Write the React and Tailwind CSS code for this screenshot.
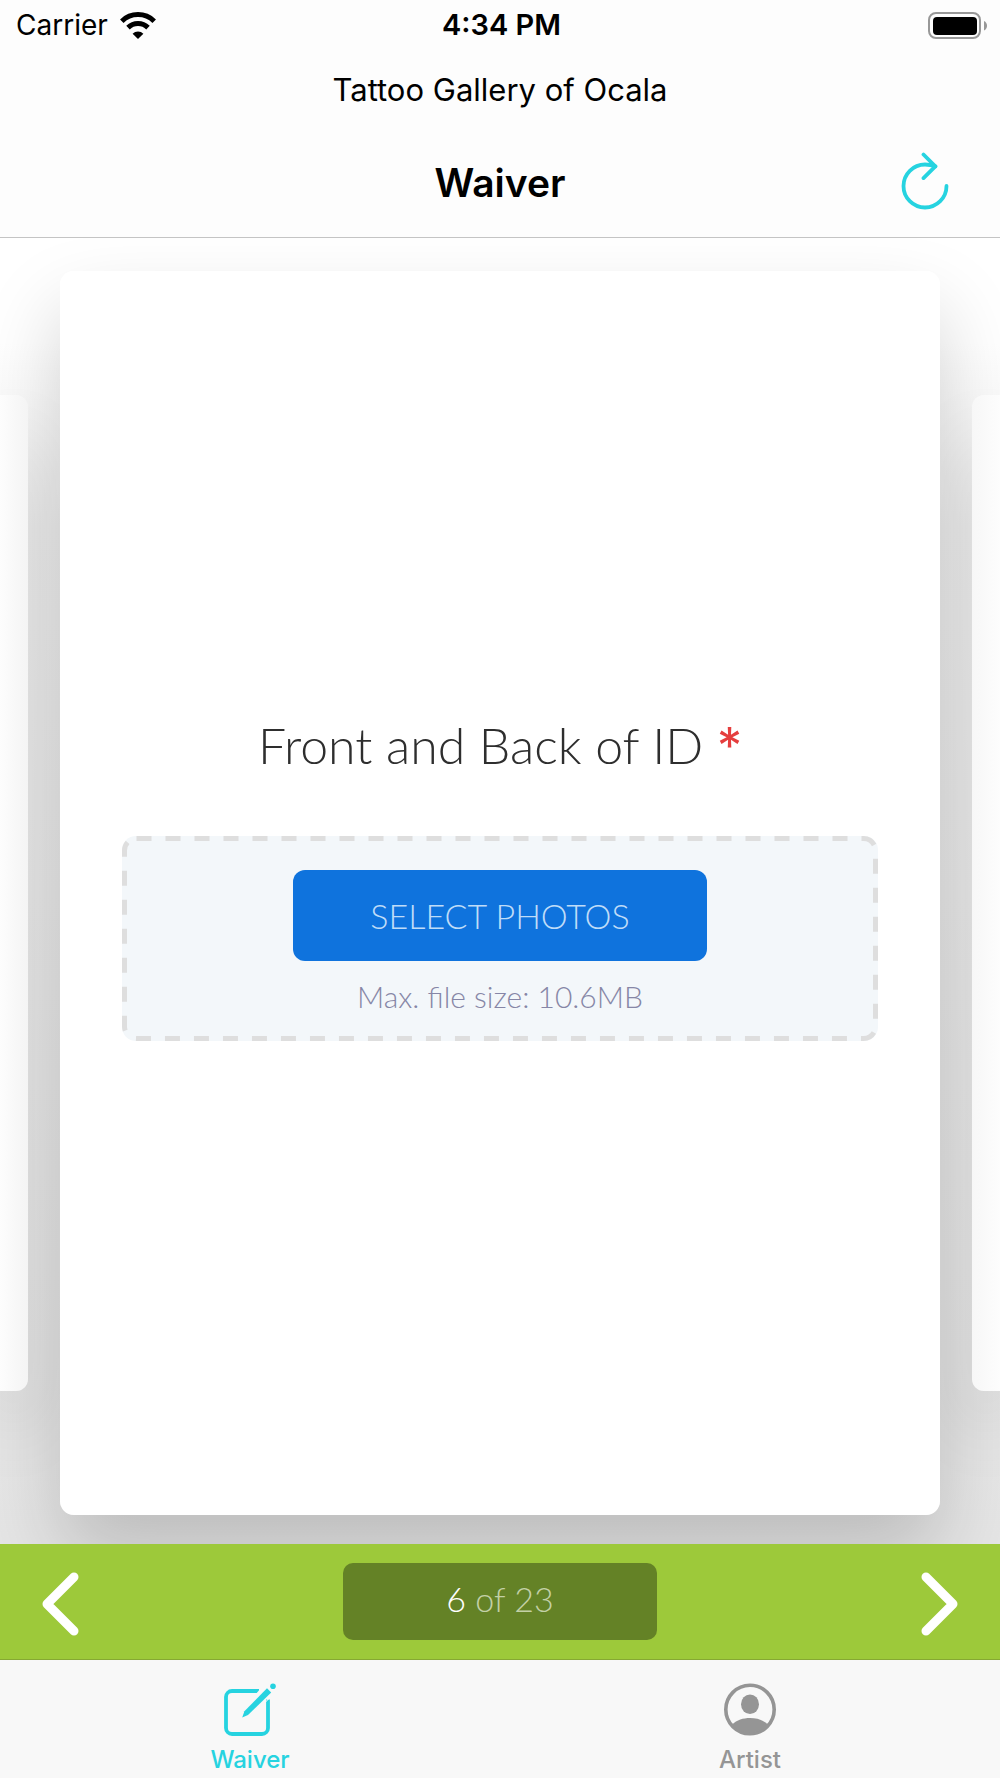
import React from 'react';

const WifiIcon = () => (
  <svg viewBox="0 0 36 27" className="w-9 h-[27px]" fill="none" stroke="#000" aria-hidden="true">
    <path d="M1.8 9.2a23.2 23.2 0 0 1 32.4 0" strokeWidth="5" />
    <path d="M8 15.6a14.3 14.3 0 0 1 20 0" strokeWidth="5" />
    <path d="M18 27l-5.4-5.3a7.6 7.6 0 0 1 10.8 0z" fill="#000" stroke="none" />
  </svg>
);

const BatteryIcon = () => (
  <svg viewBox="0 0 59 27" className="w-[59px] h-[27px]" aria-hidden="true">
    <rect x="1" y="1" width="51" height="25" rx="7" fill="none" stroke="#989898" strokeWidth="2" />
    <rect x="5" y="5" width="44" height="18" rx="4" fill="#000" />
    <path d="M56 9c4 1.5 4 8 0 9.5z" fill="#989898" />
  </svg>
);

const RefreshIcon = () => (
  <svg
    viewBox="0 0 48 58"
    className="w-12 h-[58px]"
    fill="none"
    stroke="#26d3e0"
    strokeWidth="3.8"
    strokeLinecap="round"
    strokeLinejoin="round"
    aria-hidden="true"
  >
    <path d="M45.500 34a21.500 21.500 0 1 1-21.500-21.500c4 0 7 .6 10.500 1.800" />
    <path d="M22.500 2.500l11.800 11.800-11.800 11.800" />
  </svg>
);

const ComposeIcon = () => (
  <svg viewBox="0 0 52 53" className="w-[52px] h-[53px]" fill="none" stroke="currentColor" aria-hidden="true">
    <path d="M35 8H8a6 6 0 0 0-6 6v31a6 6 0 0 0 6 6h30a6 6 0 0 0 6-6V16.500" strokeWidth="3.8" />
    <path d="M31 12L37 5v7zM40 21l7-7v-3z" fill="#f8f8f8" stroke="none" />
    <path d="M43 5.300l4.200 4.200L24 32l-5.800 2.500 2.200-6.300z" fill="currentColor" stroke="none" />
    <circle cx="49" cy="3.300" r="2.800" fill="currentColor" stroke="none" />
  </svg>
);

const PersonIcon = () => (
  <svg viewBox="0 0 52 53" className="w-[52px] h-[53px]" fill="currentColor" aria-hidden="true">
    <circle cx="26" cy="26.5" r="24.2" fill="none" stroke="currentColor" strokeWidth="3.6" />
    <ellipse cx="26" cy="21.2" rx="9" ry="9.8" />
    <path d="M8 41.500c5-4.500 11-6.500 18-6.500s13 2 18 6.500a24 24 0 0 1-36 0z" />
  </svg>
);

const Chevron = ({ d }) => (
  <svg
    viewBox="0 0 38 66"
    className="w-[38px] h-[66px]"
    fill="none"
    stroke="#fff"
    strokeWidth="9"
    strokeLinecap="round"
    strokeLinejoin="round"
    aria-hidden="true"
  >
    <path d={d} />
  </svg>
);

const Header = () => (
  <header className="bg-[#fdfdfd] border-b border-[#c4c4c4] text-black">
    <div className="grid grid-cols-3 items-center h-[50px] pl-4 pr-[13px] text-[28px]">
      <div className="flex items-center gap-3">
        <span>Carrier</span>
        <WifiIcon />
      </div>
      <span className="text-center text-[29px] font-semibold">4:34 PM</span>
      <div className="flex justify-end">
        <BatteryIcon />
      </div>
    </div>
    <p className="h-20 leading-[80px] text-center text-[31px]">Tattoo Gallery of Ocala</p>
    <div className="grid grid-cols-3 items-center h-[107px] px-[51px]">
      <span />
      <h1 className="text-center text-[39px] font-semibold">Waiver</h1>
      <button type="button" aria-label="Refresh" className="justify-self-end pb-1.5">
        <RefreshIcon />
      </button>
    </div>
  </header>
);

const UploadBox = () => (
  <div className="relative w-full h-[205px] pt-[34px] rounded-[14px] bg-[#f3f7fa] flex flex-col items-center">
    <svg className="absolute inset-0 size-full" fill="none" aria-hidden="true">
      <rect
        x="2.5"
        y="2.5"
        rx="12"
        className="w-[calc(100%-5px)] h-[calc(100%-5px)]"
        stroke="#dedede"
        strokeWidth="5"
        strokeDasharray="15 14"
      />
    </svg>
    <button
      type="button"
      className="relative w-[414px] h-[91px] rounded-xl bg-[#0f73dd] text-[#bfdcf8] text-[34px] font-light"
    >
      SELECT PHOTOS
    </button>
    <p className="mt-4 text-[30px] leading-[38px] font-light text-[#8686a6]">Max. file size: 10.6MB</p>
  </div>
);

const Carousel = () => (
  <main className="flex-1 flex gap-8 pt-[33px] pb-[29px] overflow-hidden bg-linear-to-b from-white from-8% via-[#f0f0f0] via-22% to-[#e5e5e5] font-['Lato',sans-serif]">
    <div className="relative z-10 flex-1 my-[124px] rounded-r-xl bg-linear-to-r from-[#fdfdfd] to-[#f4f4f4] shadow-[0_40px_70px_rgba(0,0,0,0.13)]" />
    <div className="w-[88%] flex rounded-[14px] shadow-[0_40px_80px_rgba(0,0,0,0.18)]">
      <section className="relative z-20 flex-1 flex flex-col items-center justify-center px-[62px] pb-[30px] rounded-[14px] bg-white">
        <h2 className="mb-15 text-[50px] leading-[60px] font-light text-[#2e2e2e]">
          Front and Back of ID <span className="font-['Inter',sans-serif] font-normal text-[#e53e3e]">*</span>
        </h2>
        <UploadBox />
      </section>
    </div>
    <div className="relative z-10 flex-1 my-[124px] rounded-l-xl bg-linear-to-l from-[#fdfdfd] to-[#f7f7f7] shadow-[0_40px_70px_rgba(0,0,0,0.13)]" />
  </main>
);

const Pager = () => (
  <nav className="relative z-30 flex items-center justify-between h-[116px] pt-1 px-[41px] border-b border-[#86a833] bg-[#9dc93a]">
    <button type="button" aria-label="Previous">
      <Chevron d="M33 6L6 33l27 27" />
    </button>
    <p className="w-[314px] h-[77px] mb-1 leading-[72px] rounded-[10px] bg-[#648226] text-center text-[34px] font-light text-[#c3d0a6] font-['Lato',sans-serif]">
      <span className="text-white">6</span> of 23
    </p>
    <button type="button" aria-label="Next">
      <Chevron d="M5 6l27 27L5 60" />
    </button>
  </nav>
);

const Tab = ({ icon, label, className }) => (
  <a href="#" className={`flex flex-col items-center gap-2 pt-[23px] text-2xl font-medium ${className}`}>
    {icon}
    <span>{label}</span>
  </a>
);

export default function App() {
  return (
    <div className="min-h-screen flex flex-col bg-white font-['Inter',sans-serif]">
      <Header />
      <Carousel />
      <Pager />
      <nav className="grid grid-cols-2 h-[118px] bg-[#f8f8f8]">
        <Tab icon={<ComposeIcon />} label="Waiver" className="text-[#26d3e0]" />
        <Tab icon={<PersonIcon />} label="Artist" className="text-[#959595]" />
      </nav>
    </div>
  );
}
